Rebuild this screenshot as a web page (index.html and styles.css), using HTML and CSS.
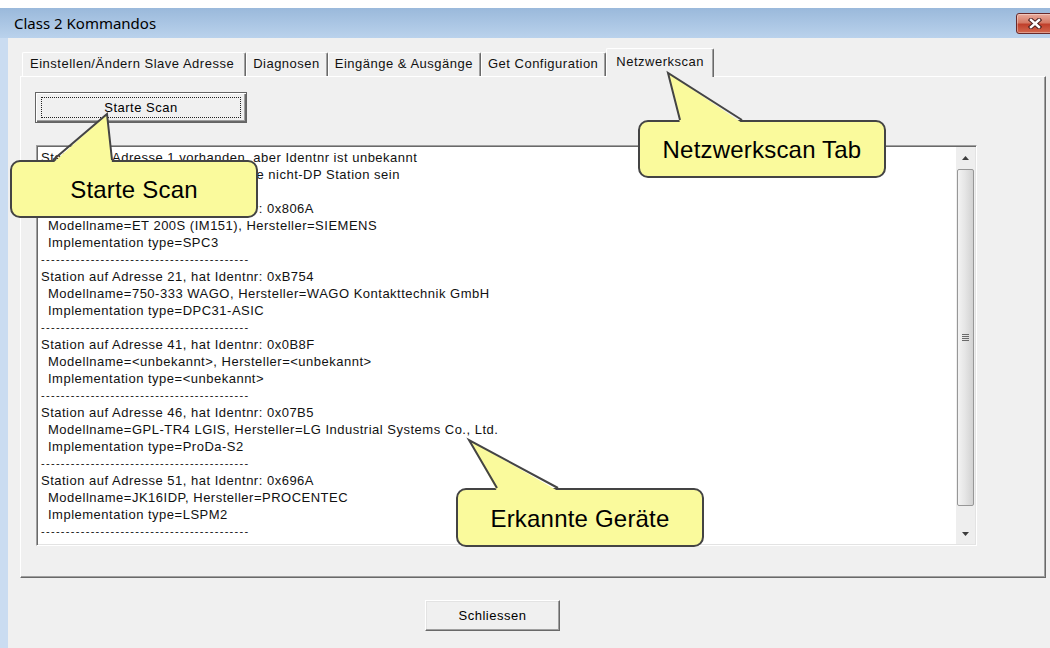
FILE: index.html
```html
<!DOCTYPE html>
<html lang="de">
<head>
    <meta charset="UTF-8">
    <meta name="viewport" content="width=device-width, initial-scale=1.0">
    <title>Class 2 Kommandos</title>
    <link rel="stylesheet" href="styles.css">
</head>
<body>
<div class="window">
    <div class="top-edge"></div>
    <div class="titlebar">
        <span class="title">Class 2 Kommandos</span>
        <div class="close-btn">
            <svg width="14" height="11" viewBox="0 0 14 11">
                <path d="M3 2 L11 9 M11 2 L3 9" stroke="#4b1f1f" stroke-width="4.4" stroke-linecap="square"/>
                <path d="M3 2 L11 9 M11 2 L3 9" stroke="#fff" stroke-width="2.4" stroke-linecap="square"/>
            </svg>
        </div>
    </div>

    <div class="frame">
        <div class="frame-left"></div>
        <div class="client">
            <div class="tabs">
                <div class="tab tab-first">Einstellen/Ändern Slave Adresse</div>
                <div class="tab">Diagnosen</div>
                <div class="tab">Eingänge &amp; Ausgänge</div>
                <div class="tab">Get Configuration</div>
                <div class="tab active">Netzwerkscan</div>
            </div>

            <div class="panel">
                <button class="btn btn-scan"><span class="focus">Starte Scan</span></button>

                <div class="listbox">
                    <div class="list-text">
                        <div>Station auf Adresse 1 vorhanden, aber Identnr ist unbekannt</div>
                        <div class="indent">Es kann möglicherweise auch eine nicht-DP Station sein</div>
                        <div class="sep">------------------------------------------</div>
                        <div>Station auf Adresse 10, hat Identnr: 0x806A</div>
                        <div class="indent">Modellname=ET 200S (IM151), Hersteller=SIEMENS</div>
                        <div class="indent">Implementation type=SPC3</div>
                        <div class="sep">------------------------------------------</div>
                        <div>Station auf Adresse 21, hat Identnr: 0xB754</div>
                        <div class="indent">Modellname=750-333 WAGO, Hersteller=WAGO Kontakttechnik GmbH</div>
                        <div class="indent">Implementation type=DPC31-ASIC</div>
                        <div class="sep">------------------------------------------</div>
                        <div>Station auf Adresse 41, hat Identnr: 0x0B8F</div>
                        <div class="indent">Modellname=&lt;unbekannt&gt;, Hersteller=&lt;unbekannt&gt;</div>
                        <div class="indent">Implementation type=&lt;unbekannt&gt;</div>
                        <div class="sep">------------------------------------------</div>
                        <div>Station auf Adresse 46, hat Identnr: 0x07B5</div>
                        <div class="indent">Modellname=GPL-TR4 LGIS, Hersteller=LG Industrial Systems Co., Ltd.</div>
                        <div class="indent">Implementation type=ProDa-S2</div>
                        <div class="sep">------------------------------------------</div>
                        <div>Station auf Adresse 51, hat Identnr: 0x696A</div>
                        <div class="indent">Modellname=JK16IDP, Hersteller=PROCENTEC</div>
                        <div class="indent">Implementation type=LSPM2</div>
                        <div class="sep">------------------------------------------</div>
                    </div>
                    <div class="scrollbar">
                        <div class="sb-btn">
                            <svg width="7" height="4" viewBox="0 0 7 4"><path d="M0 4 L3.5 0 L7 4Z" fill="#3c3c3c"/></svg>
                        </div>
                        <div class="sb-thumb">
                            <svg width="7" height="8" viewBox="0 0 7 8">
                                <path d="M0 0.5 H7 M0 2.5 H7 M0 4.5 H7 M0 6.5 H7" stroke="#6a6a6a" stroke-width="1"/>
                            </svg>
                        </div>
                        <div class="sb-track"></div>
                        <div class="sb-btn">
                            <svg width="7" height="4" viewBox="0 0 7 4"><path d="M0 0 L7 0 L3.5 4Z" fill="#3c3c3c"/></svg>
                        </div>
                    </div>
                </div>
            </div>

            <div class="footer">
                <button class="btn btn-close">Schliessen</button>
            </div>
        </div>
    </div>

    <!-- annotation callouts -->
    <div class="callout callout-scan">
        <svg class="pointer" width="248" height="50" viewBox="0 0 248 50">
            <polygon points="43,50 97,1 102,50" fill="#fafa9c"/>
            <polyline points="43,47 97,1 102,47" fill="none" stroke="#444" stroke-width="2"/>
        </svg>
        Starte Scan
    </div>
    <div class="callout callout-tab">
        <svg class="pointer" width="248" height="51" viewBox="0 0 248 51">
            <polygon points="42,51 30,1 104,51" fill="#fafa9c"/>
            <polyline points="42,48 30,1 104,48" fill="none" stroke="#444" stroke-width="2"/>
        </svg>
        Netzwerkscan Tab
    </div>
    <div class="callout callout-devices">
        <svg class="pointer" width="248" height="52" viewBox="0 0 248 52">
            <polygon points="41,52 13,1 102,52" fill="#fafa9c"/>
            <polyline points="41,49 13,1 102,49" fill="none" stroke="#444" stroke-width="2"/>
        </svg>
        Erkannte Geräte
    </div>
</div>
</body>
</html>
```

FILE: styles.css
```css
body {
    margin: 0;
    background-color: #fff;
    font-family: "Liberation Sans", Arial, sans-serif;
    color: #000;
}

.window {
    position: relative;
    width: 1050px;
    height: 648px;
    overflow: hidden;
    background-color: #fff;
}

.top-edge {
    height: 8px;
    background-color: #fff;
}

.titlebar {
    height: 30px;
    display: flex;
    justify-content: space-between;
    overflow: hidden;
    background: linear-gradient(#9ab9db, #bad2ec);
}

.title {
    font-family: "Noto Sans", "Open Sans", sans-serif;
    font-size: 15px;
    line-height: 30px;
    padding-left: 14px;
}

.close-btn {
    width: 38px;
    height: 21px;
    margin-top: 5px;
    margin-right: -4px;
    box-sizing: border-box;
    border: 1px solid #6a2a2a;
    border-radius: 3px;
    background: linear-gradient(#e9ab9c, #d57a66 45%, #c0402c 55%, #d3694f);
    box-shadow: inset 0 0 0 1px rgba(255, 255, 255, 0.35);
    display: flex;
    align-items: center;
    justify-content: center;
}

.frame {
    display: flex;
    height: 610px;
}

.frame-left {
    width: 8px;
    background-color: #cadcf1;
}

.client {
    flex: 1;
    background-color: #f0f0f0;
    padding: 10px 4px 0 12px;
}

/* tab strip */
.tabs {
    display: flex;
    align-items: flex-end;
    height: 28px;
    padding-left: 2px;
    position: relative;
    z-index: 1;
}

.tab {
    height: 24px;
    box-sizing: border-box;
    padding: 0 7px 0 6px;
    line-height: 22px;
    font-size: 13px;
    letter-spacing: 0.5px;
    white-space: nowrap;
    color: #111;
    background-color: #f0f0f0;
    border-top: 1px solid #fff;
    border-left: 1px solid #fff;
    border-right: 1px solid #696969;
    box-shadow: inset -1px 0 #a0a0a0;
    border-radius: 2px 2px 0 0;
}

.tab-first {
    padding: 0 11px 0 7px;
}

.tab.active {
    height: 29px;
    margin-bottom: -1px;
    padding: 0 9px 3px 9px;
    line-height: 25px;
}

/* tab page */
.panel {
    height: 502px;
    box-sizing: border-box;
    border: 1px solid;
    border-color: #fff #696969 #696969 #fff;
    box-shadow: inset -1px -1px #a0a0a0;
    padding: 15px 0 0 14px;
}

.btn {
    font-family: "Liberation Sans", Arial, sans-serif;
    font-size: 13px;
    letter-spacing: 0.5px;
    color: #000;
    background-color: #f0f0f0;
    border: 1px solid;
    border-color: #fff #696969 #696969 #fff;
    box-shadow: inset -1px -1px #a0a0a0;
    padding: 0;
    cursor: pointer;
}

.btn-scan {
    display: flex;
    width: 212px;
    height: 31px;
    padding: 4px 5px;
    border-color: #646464;
    box-shadow: inset 1px 1px #fff, inset -1px -1px #696969, inset -2px -2px #a0a0a0;
}

.btn-scan .focus {
    flex: 1;
    border: 1px dotted #222;
    line-height: 19px;
    text-align: center;
}

.listbox {
    display: flex;
    width: 941px;
    height: 401px;
    box-sizing: border-box;
    margin: 22px 0 0 1px;
    padding: 1px;
    border: 1px solid;
    border-color: #a0a0a0 #fff #fff #a0a0a0;
    box-shadow: inset 1px 1px #696969, inset -1px -1px #e3e3e3;
    background-color: #fff;
}

.list-text {
    flex: 1;
    padding: 2px 0 0 3px;
    font-size: 13px;
    letter-spacing: 0.5px;
    line-height: 17px;
    white-space: nowrap;
    overflow: hidden;
    color: #111;
    background-color: #fff;
}

.indent {
    padding-left: 7px;
}

.sep {
    font-size: 11px;
    letter-spacing: 1.3px;
}

.scrollbar {
    width: 19px;
    display: flex;
    flex-direction: column;
    background-color: #eeeeee;
}

.sb-btn {
    height: 21px;
    display: flex;
    align-items: center;
    justify-content: center;
}

.sb-thumb {
    height: 337px;
    box-sizing: border-box;
    margin: 1px 1px 0 1px;
    border: 1px solid #979797;
    border-radius: 2px;
    background: linear-gradient(90deg, #f3f3f3, #e6e6e6 45%, #d2d2d2);
    display: flex;
    align-items: center;
    justify-content: center;
}

.sb-track {
    flex: 1;
}

.footer {
    padding: 22px 0 0 405px;
}

.btn-close {
    width: 135px;
    height: 31px;
    box-shadow: inset -1px -1px #a0a0a0, inset 1px 1px #e3e3e3;
}

/* yellow annotation bubbles */
.callout {
    position: absolute;
    width: 248px;
    height: 58px;
    box-sizing: border-box;
    padding-top: 2px;
    border: 2px solid #444;
    border-radius: 10px;
    background-color: #fafa9c;
    display: flex;
    align-items: center;
    justify-content: center;
    font-family: "Liberation Sans", Arial, sans-serif;
    font-size: 24px;
    letter-spacing: 0.2px;
    z-index: 5;
}

.callout .pointer {
    position: absolute;
    left: -2px;
    overflow: visible;
}

.callout-scan {
    left: 10px;
    top: 160px;
}

.callout-scan .pointer {
    top: -49px;
}

.callout-tab {
    left: 638px;
    top: 120px;
}

.callout-tab .pointer {
    top: -50px;
}

.callout-devices {
    left: 456px;
    top: 488px;
    height: 59px;
}

.callout-devices .pointer {
    top: -51px;
}
```
